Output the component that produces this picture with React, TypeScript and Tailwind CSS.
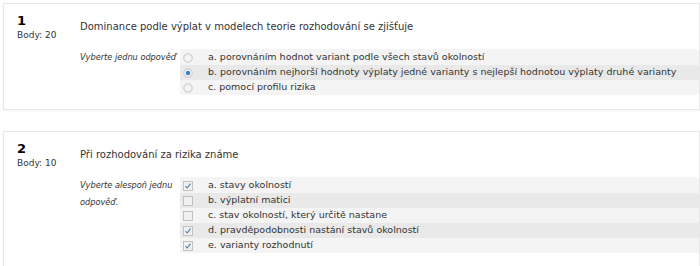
import React from 'react'

interface Answer {
  label: string
  checked: boolean
}

interface Question {
  num: number
  points: number
  text: string
  hint: string
  multi: boolean
  answers: Answer[]
}

const questions: Question[] = [
  {
    num: 1,
    points: 20,
    text: 'Dominance podle výplat v modelech teorie rozhodování se zjišťuje',
    hint: 'Vyberte jednu odpověď',
    multi: false,
    answers: [
      { label: 'a. porovnáním hodnot variant podle všech stavů okolností', checked: false },
      { label: 'b. porovnáním nejhorší hodnoty výplaty jedné varianty s nejlepší hodnotou výplaty druhé varianty', checked: true },
      { label: 'c. pomocí profilu rizika', checked: false },
    ],
  },
  {
    num: 2,
    points: 10,
    text: 'Při rozhodování za rizika známe',
    hint: 'Vyberte alespoň jednu odpověď.',
    multi: true,
    answers: [
      { label: 'a. stavy okolností', checked: true },
      { label: 'b. výplatní matici', checked: false },
      { label: 'c. stav okolností, který určitě nastane', checked: false },
      { label: 'd. pravděpodobnosti nastání stavů okolností', checked: true },
      { label: 'e. varianty rozhodnutí', checked: true },
    ],
  },
]

const Radio = ({ checked }: { checked: boolean }) => (
  <svg width="10" height="10" viewBox="0 0 10 10">
    <circle cx="5" cy="5" r="4.2" fill="#f4f4f4" stroke="#bdbdbd" strokeWidth="0.9" />
    {checked && <circle cx="5" cy="5" r="2.2" fill="#3b7fc4" />}
  </svg>
)

const Checkbox = ({ checked }: { checked: boolean }) => (
  <svg width="10" height="10" viewBox="0 0 10 10">
    <rect x="0.5" y="0.5" width="9" height="9" fill="#f0f0f0" stroke="#bcbcbc" strokeWidth="0.9" />
    {checked && <path d="M2.5 5.1 L4.2 7 L7.5 2.7" fill="none" stroke="#5577aa" strokeWidth="1.1" />}
  </svg>
)

const QuestionCard = ({ q, last }: { q: Question; last: boolean }) => (
  <div
    className={`flex border border-[#e8e8e8] bg-white shadow-[0_1px_2px_rgba(0,0,0,0.06)] pl-[13px] pt-[9px] ${last ? 'pb-[24px]' : 'pb-[14px]'}`}
  >
    <div className="w-[63px] shrink-0">
      <div className="text-[13px] font-bold leading-[16px] text-black">{q.num}</div>
      <div className="text-[9px] leading-[12px] text-[#333]">Body: {q.points}</div>
    </div>
    <div className="flex-1">
      <div className="mt-[7px] text-[10px] leading-[14px] text-[#333]">{q.text}</div>
      <div className="mt-[15px] flex">
        <div className="w-[100px] shrink-0 text-[8.2px] italic leading-[17px] text-[#333]">{q.hint}</div>
        <div className="flex-1 bg-[#f4f4f4] pt-[1px]">
          {q.answers.map((a, i) => (
            <div
              key={i}
              className={`flex h-[15px] items-center pl-[3px] ${i % 2 === 1 ? 'bg-[#e9e9e9]' : ''}`}
            >
              <span className="flex w-[25px] shrink-0">
                {q.multi ? <Checkbox checked={a.checked} /> : <Radio checked={a.checked} />}
              </span>
              <span className="whitespace-nowrap text-[9.5px] text-[#333]">{a.label}</span>
            </div>
          ))}
        </div>
      </div>
    </div>
  </div>
)

export default function App() {
  return (
    <div className="h-[266px] w-[700px] overflow-hidden bg-white pl-[3px] pt-[3px] font-['DejaVu_Sans',Verdana,sans-serif]">
      <div className="flex flex-col gap-[21px]">
        {questions.map((q, i) => (
          <QuestionCard key={q.num} q={q} last={i === questions.length - 1} />
        ))}
      </div>
    </div>
  )
}
